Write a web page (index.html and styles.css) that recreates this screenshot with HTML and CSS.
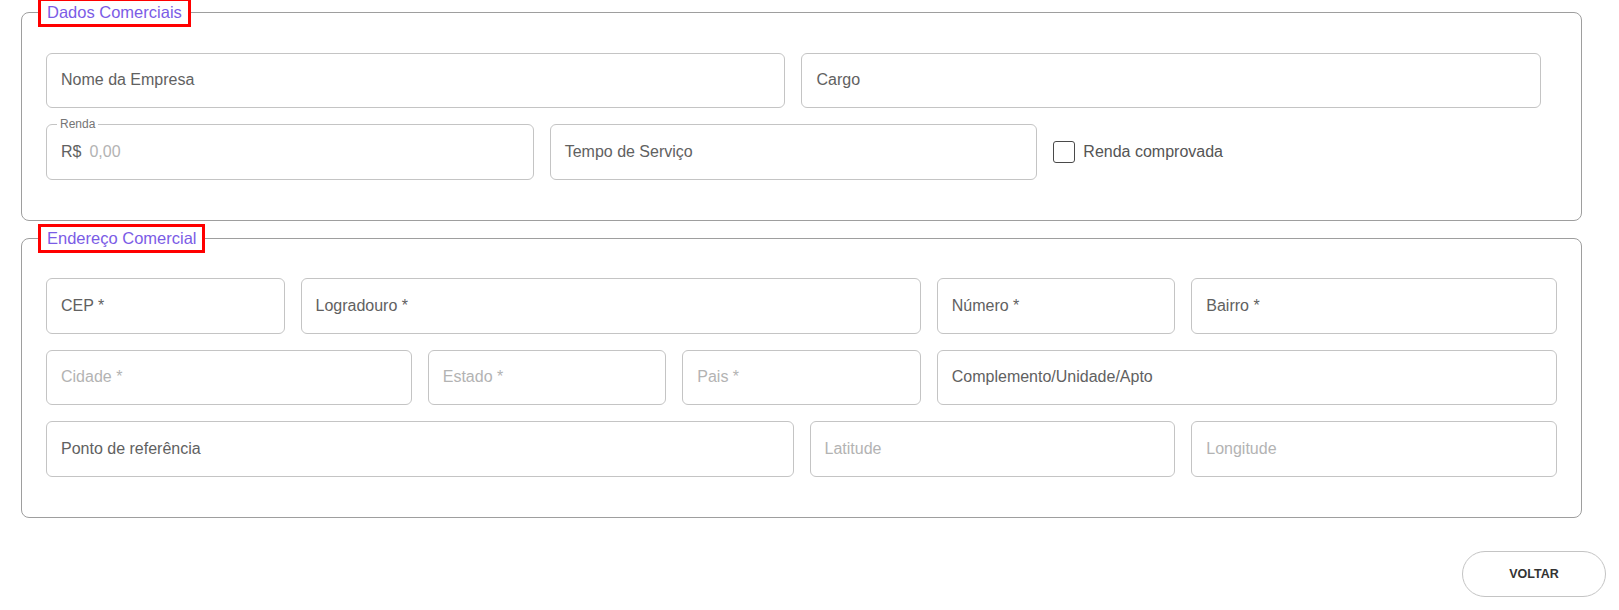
FILE: index.html
```html
<!DOCTYPE html>
<html lang="pt-BR">
<head>
<meta charset="utf-8">
<title>Dados Comerciais</title>
<link rel="stylesheet" href="styles.css">
</head>
<body>
<div class="page">
  <fieldset class="group group--company">
    <legend class="group-title">Dados Comerciais</legend>
    <div class="grid">
      <div class="field span-6"><span class="value">Nome da Empresa</span></div>
      <div class="field span-6"><span class="value">Cargo</span></div>
      <div class="field field--notched span-4">
        <span class="notch-label">Renda</span>
        <span class="value">R$</span><span class="placeholder money">0,00</span>
      </div>
      <div class="field span-4"><span class="value">Tempo de Serviço</span></div>
      <label class="check span-4"><span class="check-box"></span><span class="check-text">Renda comprovada</span></label>
    </div>
  </fieldset>

  <fieldset class="group group--address">
    <legend class="group-title">Endereço Comercial</legend>
    <div class="grid">
      <div class="field span-2"><span class="value">CEP *</span></div>
      <div class="field span-5"><span class="value">Logradouro *</span></div>
      <div class="field span-2"><span class="value">Número *</span></div>
      <div class="field span-3"><span class="value">Bairro *</span></div>

      <div class="field span-3"><span class="placeholder">Cidade *</span></div>
      <div class="field span-2"><span class="placeholder">Estado *</span></div>
      <div class="field span-2"><span class="placeholder">Pais *</span></div>
      <div class="field span-5"><span class="value">Complemento/Unidade/Apto</span></div>

      <div class="field span-6"><span class="value">Ponto de referência</span></div>
      <div class="field span-3"><span class="placeholder">Latitude</span></div>
      <div class="field span-3"><span class="placeholder">Longitude</span></div>
    </div>
  </fieldset>

  <div class="actions">
    <button class="btn" type="button">VOLTAR</button>
  </div>
</div>
</body>
</html>
```
FILE: styles.css
```css
* { box-sizing: border-box; }

html, body {
  margin: 0;
  background: #ffffff;
}

body {
  font-family: "Liberation Sans", Arial, sans-serif;
  color: #616161;
}

.page {
  padding: 0 13px 0 21px;
  margin-top: -2px;
}

.group {
  margin: 0 24px 0 0;
  border: 1px solid #9e9e9e;
  border-radius: 8px;
  padding: 25.5px 24px 40px 24px;
  min-width: 0;
}

.group--company {
  padding-right: 40px;
}

.group--address {
  margin-top: 3px;
}

.group-title {
  margin-left: -8px;
  border: 3px solid #ff0000;
  padding: 0 6px;
  height: 29px;
  line-height: 23px;
  font-size: 16.5px;
  color: #7b5ce6;
}

.grid {
  display: grid;
  grid-template-columns: repeat(12, minmax(0, 1fr));
  grid-auto-rows: 55.5px;
  column-gap: 16px;
  row-gap: 16px;
}

.span-2 { grid-column: span 2; }
.span-3 { grid-column: span 3; }
.span-4 { grid-column: span 4; }
.span-5 { grid-column: span 5; }
.span-6 { grid-column: span 6; }

.field {
  position: relative;
  display: flex;
  align-items: center;
  border: 1px solid #c4c4c4;
  border-radius: 6px;
  padding: 0 14px;
  font-size: 16px;
  background: #ffffff;
}

.value {
  color: #616161;
}

.placeholder {
  color: #b3b3b3;
}

.money {
  margin-left: 8px;
}

.notch-label {
  position: absolute;
  top: -8px;
  left: 10px;
  padding: 0 3px;
  background: #ffffff;
  font-size: 12px;
  line-height: 14px;
  color: #757575;
}

.check {
  display: flex;
  align-items: center;
  gap: 8px;
  font-size: 16px;
  color: #555555;
}

.check-box {
  width: 22px;
  height: 22px;
  border: 1.5px solid #4a4a4a;
  border-radius: 3px;
  flex: none;
}

.actions {
  display: flex;
  justify-content: flex-end;
  margin-top: 33px;
}

.btn {
  width: 144px;
  height: 46px;
  border: 1px solid #c4c4c4;
  border-radius: 23px;
  background: #ffffff;
  font-family: "Liberation Sans", Arial, sans-serif;
  font-size: 12.5px;
  font-weight: 700;
  color: #333333;
  cursor: pointer;
}
```
